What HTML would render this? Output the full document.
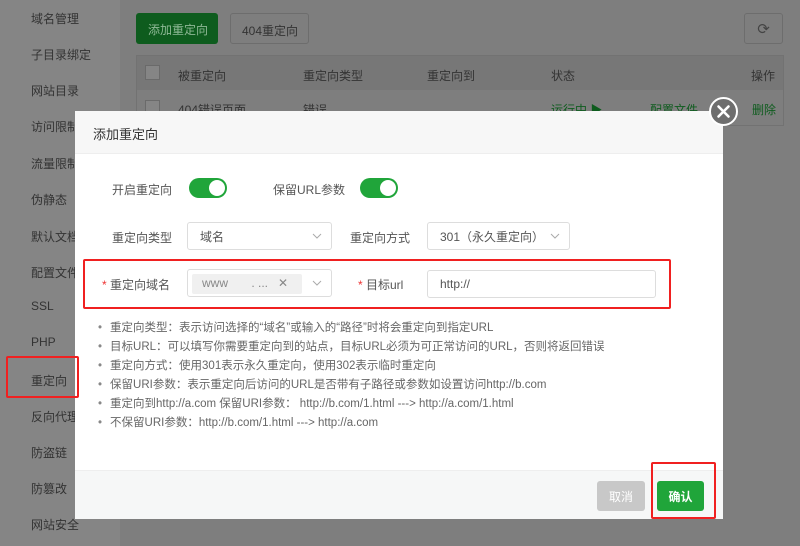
<!DOCTYPE html>
<html><head><meta charset="utf-8"><style>
*{margin:0;padding:0;box-sizing:border-box}
body{width:800px;height:546px;overflow:hidden;position:relative;background:#7e7e7e;font-family:"Liberation Sans","Noto Sans CJK SC",sans-serif;font-size:12px;color:#333}
.side{position:absolute;left:0;top:0;width:120px;height:546px;background:#858585}
.side div{position:absolute;left:31px;color:#333;font-size:12px}
.abs{position:absolute}
.modal{position:absolute;left:75px;top:111px;width:648px;height:408px;background:#fff;border-radius:2px}
.mh{height:43px;background:#f7f7f7;border-bottom:1px solid #eee;padding:13px 0 0 18px;font-size:13px;color:#333}
.lbl{position:absolute;font-size:12px;color:#555}
.sw{position:absolute;width:38px;height:20px;border-radius:10px;background:#20a53a}
.sw::after{content:"";position:absolute;right:2px;top:2px;width:16px;height:16px;border-radius:50%;background:#fff}
.sel{position:absolute;height:28px;border:1px solid #ddd;border-radius:3px;background:#fff;padding:5px 0 0 12px;color:#555}
.sel svg{position:absolute;right:9px;top:10px}
ul{position:absolute;left:23px;top:208px;list-style:none;color:#666;font-size:11.5px;line-height:19px}
ul li::before{content:"•";color:#888;margin-right:8px}
.foot{position:absolute;left:0;top:359px;width:648px;height:49px;background:#f6f7f7;border-top:1px solid #eee}
.red{position:absolute;border:2px solid #f02020;border-radius:2px}
</style></head><body>
<div class="side">
<div style="top:10px">域名管理</div><div style="top:46px">子目录绑定</div><div style="top:82px">网站目录</div><div style="top:118px">访问限制</div><div style="top:155px">流量限制</div><div style="top:191px">伪静态</div><div style="top:228px">默认文档</div><div style="top:264px">配置文件</div><div style="top:299px">SSL</div><div style="top:335px">PHP</div><div style="top:372px">重定向</div><div style="top:408px">反向代理</div><div style="top:444px">防盗链</div><div style="top:480px">防篡改</div><div style="top:516px">网站安全</div>
</div>
<div class="abs" style="left:136px;top:13px;width:82px;height:31px;background:#0e5c1e;border-radius:3px;color:#8fb996;padding:8px 0 0 12px">添加重定向</div>
<div class="abs" style="left:230px;top:13px;width:79px;height:31px;border:1px solid #6d6d6d;border-radius:3px;color:#333;padding:8px 0 0 11px">404重定向</div>
<div class="abs" style="left:744px;top:13px;width:39px;height:31px;border:1px solid #6d6d6d;border-radius:3px;color:#444;text-align:center;padding-top:6px;font-size:15px">⟳</div>
<div class="abs" style="left:136px;top:55px;width:648px;height:36px;background:#777;border:1px solid #727272"></div>
<div class="abs" style="left:136px;top:90px;width:648px;height:36px;background:#7e7e7e;border:1px solid #727272;border-top:none"></div>
<div class="abs" style="left:145px;top:65px;width:15px;height:15px;border:1px solid #6a6a6a;background:#858585"></div>
<div class="abs" style="left:145px;top:100px;width:15px;height:15px;border:1px solid #6a6a6a;background:#858585"></div>
<div class="abs" style="left:178px;top:67px;color:#333">被重定向</div>
<div class="abs" style="left:303px;top:67px;color:#333">重定向类型</div>
<div class="abs" style="left:427px;top:67px;color:#333">重定向到</div>
<div class="abs" style="left:551px;top:67px;color:#333">状态</div>
<div class="abs" style="left:751px;top:67px;color:#333">操作</div>
<div class="abs" style="left:178px;top:101px;color:#333">404错误页面</div>
<div class="abs" style="left:303px;top:101px;color:#333">错误</div>
<div class="abs" style="left:551px;top:101px;color:#0e5c1e">运行中 ▶</div>
<div class="abs" style="left:650px;top:101px;color:#0e5c1e">配置文件</div>
<div class="abs" style="left:752px;top:101px;color:#0e5c1e">删除</div>

<div class="modal">
<div class="mh">添加重定向</div>
<div class="lbl" style="left:37px;top:70px">开启重定向</div><div class="sw" style="left:114px;top:67px"></div>
<div class="lbl" style="left:198px;top:70px">保留URL参数</div><div class="sw" style="left:285px;top:67px"></div>
<div class="lbl" style="left:37px;top:118px">重定向类型</div>
<div class="sel" style="left:112px;top:111px;width:145px">域名<svg width="10" height="6" viewBox="0 0 10 6"><path d="M1 1L5 5L9 1" fill="none" stroke="#aaa"/></svg></div>
<div class="lbl" style="left:275px;top:118px">重定向方式</div>
<div class="sel" style="left:352px;top:111px;width:143px">301（永久重定向）<svg width="10" height="6" viewBox="0 0 10 6"><path d="M1 1L5 5L9 1" fill="none" stroke="#aaa"/></svg></div>
<div class="lbl" style="left:27px;top:165px"><span style="color:#e33">*</span> 重定向域名</div>
<div class="sel" style="left:112px;top:158px;width:145px;padding:4px 0 0 4px"><span style="display:inline-block;width:110px;height:20px;background:#f0f0f0;border-radius:2px;padding:2px 0 0 10px;color:#888">www &nbsp; &nbsp; &nbsp; . ... &nbsp; ✕</span><svg width="10" height="6" viewBox="0 0 10 6"><path d="M1 1L5 5L9 1" fill="none" stroke="#aaa"/></svg></div>
<div class="lbl" style="left:283px;top:165px"><span style="color:#e33">*</span> 目标url</div>
<div class="sel" style="left:352px;top:159px;width:229px;padding-top:6px">http://</div>
<ul>
<li>重定向类型：表示访问选择的“域名”或输入的“路径”时将会重定向到指定URL</li>
<li>目标URL：可以填写你需要重定向到的站点，目标URL必须为可正常访问的URL，否则将返回错误</li>
<li>重定向方式：使用301表示永久重定向，使用302表示临时重定向</li>
<li>保留URI参数：表示重定向后访问的URL是否带有子路径或参数如设置访问http://b.com</li>
<li>重定向到http://a.com 保留URI参数： http://b.com/1.html ---&gt; http://a.com/1.html</li>
<li>不保留URI参数：http://b.com/1.html ---&gt; http://a.com</li>
</ul>
<div class="foot">
<div class="abs" style="left:522px;top:10px;width:48px;height:30px;background:#c8c8c8;border-radius:3px;color:#fff;text-align:center;padding-top:7px">取消</div>
<div class="abs" style="left:582px;top:10px;width:47px;height:30px;background:#20a53a;border-radius:3px;color:#fff;text-align:center;padding-top:7px;font-weight:bold">确认</div>
</div>
</div>
<div class="red" style="left:83px;top:259px;width:588px;height:50px"></div>
<div class="red" style="left:6px;top:356px;width:73px;height:42px"></div>
<div class="red" style="left:651px;top:462px;width:65px;height:57px"></div>
<div class="abs" style="left:709px;top:97px;width:29px;height:29px;border-radius:50%;background:#6e6e6e;border:2px solid #fff"><svg width="25" height="25" viewBox="0 0 25 25" style="position:absolute;left:0;top:0"><path d="M7.5 7.5L17.5 17.5M17.5 7.5L7.5 17.5" stroke="#fff" stroke-width="2.6" stroke-linecap="round"/></svg></div>
</body></html>
